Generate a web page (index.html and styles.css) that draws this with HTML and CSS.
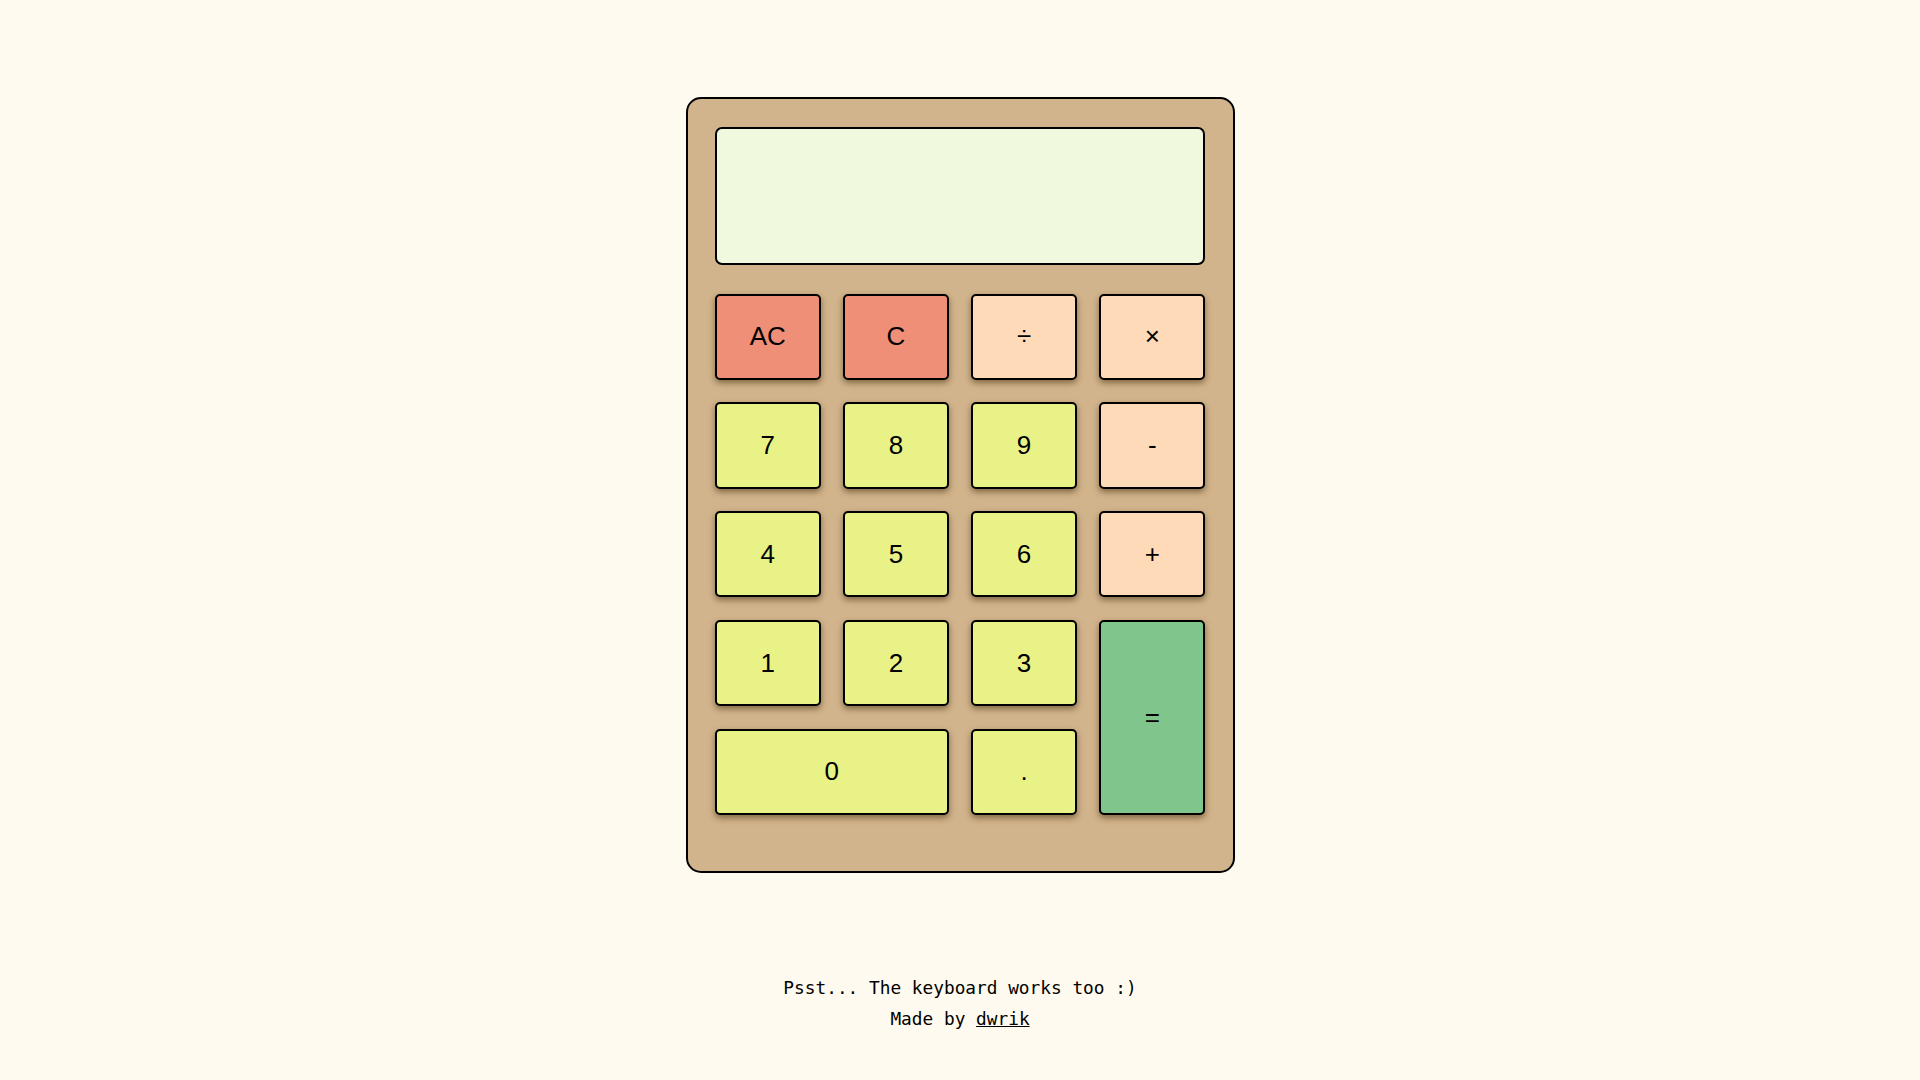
FILE: index.html
```html
<!DOCTYPE html>
<html lang="en">
<head>
<meta charset="utf-8">
<title>Calculator</title>
<link rel="stylesheet" href="styles.css">
</head>
<body>
<main class="page">
  <div class="calculator">
    <div class="display"></div>
    <div class="keys">
      <button class="key clear">AC</button>
      <button class="key clear">C</button>
      <button class="key op">÷</button>
      <button class="key op">×</button>
      <button class="key num">7</button>
      <button class="key num">8</button>
      <button class="key num">9</button>
      <button class="key op">-</button>
      <button class="key num">4</button>
      <button class="key num">5</button>
      <button class="key num">6</button>
      <button class="key op">+</button>
      <button class="key num">1</button>
      <button class="key num">2</button>
      <button class="key num">3</button>
      <button class="key equals">=</button>
      <button class="key num zero">0</button>
      <button class="key num">.</button>
    </div>
  </div>
  <footer class="footer">
    <p class="note">Psst... The keyboard works too :)</p>
    <p class="note">Made by <a class="author" href="#">dwrik</a></p>
  </footer>
</main>
</body>
</html>
```
FILE: styles.css
```css
html, body {
  margin: 0;
  padding: 0;
  background: #fffaef;
}
.page {
  display: flex;
  flex-direction: column;
  align-items: center;
  padding-top: 97px;
  font-family: "DejaVu Sans Mono", monospace;
}
.calculator {
  box-sizing: border-box;
  width: 549px;
  height: 776px;
  background: #d2b48c;
  border: 2.5px solid #000;
  border-radius: 15px;
  padding: 27.5px 27.5px 0 27.5px;
}
.display {
  box-sizing: border-box;
  height: 138px;
  background: #f0f8de;
  border: 2px solid #000;
  border-radius: 7px;
  margin-bottom: 29px;
}
.keys {
  display: grid;
  grid-template-columns: repeat(4, 1fr);
  grid-auto-rows: 86.3px;
  column-gap: 22.67px;
  row-gap: 22.5px;
}
.key {
  box-sizing: border-box;
  border: 2px solid #000;
  border-radius: 5px;
  font-family: "Liberation Sans", Arial, sans-serif;
  font-size: 26px;
  color: #000;
  padding: 0;
  box-shadow: 0 3px 6px rgba(60, 40, 10, 0.55);
  cursor: pointer;
}
.clear { background: #f08f78; }
.op { background: #ffdab8; }
.num { background: #e9f286; }
.equals {
  background: #80c68c;
  grid-row: span 2;
}
.zero { grid-column: span 2; }
.footer {
  margin-top: 99px;
  text-align: center;
}
.note {
  margin: 0;
  font-size: 17.8px;
  line-height: 31px;
  color: #000;
}
.author { color: #000; }
```
